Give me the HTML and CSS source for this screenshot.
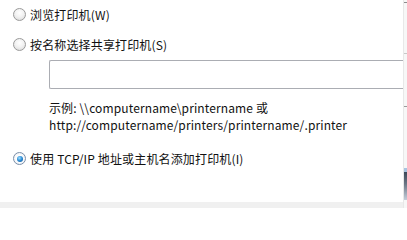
FILE: index.html
```html
<!DOCTYPE html>
<html lang="zh-CN">
<head>
<meta charset="utf-8">
<link rel="stylesheet" href="styles.css">
</head>
<body>
<div class="window">
  <div class="main">
    <div class="content">
      <div class="option opt1">
        <span class="radio"></span>
        <span class="label">浏览打印机(W)</span>
      </div>
      <div class="option opt2">
        <span class="radio"></span>
        <span class="label">按名称选择共享打印机(S)</span>
      </div>
      <div class="field"></div>
      <div class="example">
        <div>示例: \\computername\printername 或</div>
        <div>http://computername/printers/printername/.printer</div>
      </div>
      <div class="option opt3">
        <span class="radio checked"></span>
        <span class="label">使用 TCP/IP 地址或主机名添加打印机(I)</span>
      </div>
    </div>
    <div class="footer"></div>
  </div>
  <div class="strip">
    <span class="mark m1"></span>
    <span class="mark m2"></span>
    <span class="mark m3"></span>
    <span class="glass"></span>
  </div>
</div>
</body>
</html>
```
FILE: styles.css
```css
html, body {
  margin: 0;
  padding: 0;
  background: #ffffff;
}
body {
  width: 407px;
  height: 208px;
  overflow: hidden;
  font-family: "Noto Sans CJK SC", "Noto Sans", sans-serif;
  font-size: 12px;
  color: #111111;
}
.window {
  display: flex;
  width: 407px;
  height: 208px;
}
.main {
  width: 403px;
  display: flex;
  flex-direction: column;
}
.content {
  flex: 1;
  display: flex;
  flex-direction: column;
  padding-left: 13px;
}
.option {
  display: flex;
  align-items: center;
  height: 17px;
  line-height: 17px;
}
.opt1 { margin-top: 6px; }
.opt2 { margin-top: 13px; }
.opt3 { margin-top: 17px; }
.radio {
  width: 11px;
  height: 11px;
  border: 1px solid #9a9a9a;
  border-radius: 50%;
  background: radial-gradient(circle at 50% 35%, #ffffff 0%, #f2f2f2 45%, #d6d6d6 100%);
  margin-right: 4px;
  flex: none;
  display: flex;
  align-items: center;
  justify-content: center;
}
.radio.checked {
  border-color: #7a8ea8;
  background: radial-gradient(circle, #ffffff 40%, #e4e8ee 100%);
}
.radio.checked::after {
  content: "";
  width: 6px;
  height: 6px;
  border-radius: 50%;
  background: radial-gradient(circle at 40% 35%, #9fe0ff 0%, #2a8ad4 50%, #0f4f8c 100%);
}
.label {
  white-space: nowrap;
  letter-spacing: 0.15px;
}
.field {
  margin-top: 7px;
  margin-left: 36px;
  height: 27px;
  border: 1px solid #abadb3;
  border-right: none;
  border-radius: 2px 0 0 2px;
  background: #ffffff;
}
.example {
  margin-top: 10px;
  margin-left: 36px;
  line-height: 17px;
  white-space: nowrap;
  letter-spacing: 0.12px;
}
.footer {
  height: 6px;
  background: #f0f0f0;
}
.strip {
  width: 4px;
  position: relative;
  background: #f7f7f7;
  border-left: 1px solid #e8e8e8;
  box-sizing: border-box;
}
.mark {
  position: absolute;
  left: 0;
  right: 0;
  height: 1px;
  background: #8c8c8c;
}
.m1 { top: 2px; }
.m2 { top: 53px; background: #c8c8c8; }
.m3 { top: 106px; background: #9a9a9a; }
.glass {
  position: absolute;
  left: 0;
  right: 0;
  top: 168px;
  height: 32px;
  background: linear-gradient(to bottom, #a9c4e0 0%, #a9c4e0 12%, #3d4a5a 14%, #6b7685 50%, #c5cfdc 100%);
}
```
